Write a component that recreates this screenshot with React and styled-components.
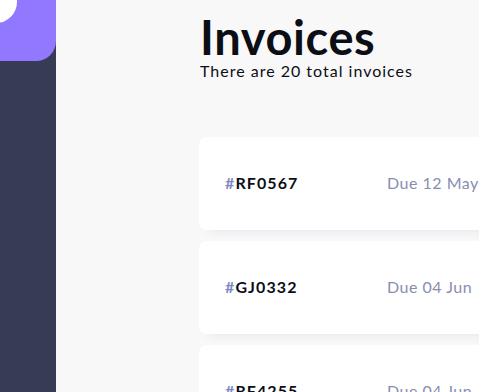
import styled, { createGlobalStyle } from "styled-components";

const Global = createGlobalStyle`
  html, body {
    margin: 0;
    padding: 0;
    background: #f8f8f8;
    font-family: 'Lato', 'Liberation Sans', sans-serif;
  }
`;

const Page = styled.div`
  display: flex;
  width: 479px;
  height: 392px;
  overflow: hidden;
`;

const Sidebar = styled.aside`
  flex: 0 0 56px;
  background: #373b53;
  display: flex;
  flex-direction: column;
`;

const Logo = styled.div`
  width: 56px;
  height: 61px;
  background: #9277ff;
  border-radius: 0 0 20px 0;
  overflow: hidden;
`;

const Main = styled.main`
  flex: 1;
  padding: 17px 0 0 144px;
  overflow: hidden;
`;

const Title = styled.h1`
  margin: 0;
  font-size: 47px;
  line-height: 40px;
  font-weight: 700;
  color: #0c0e16;
  letter-spacing: 0.6px;
`;

const Subtitle = styled.p`
  margin: 4px 0 0;
  font-size: 16px;
  line-height: 20px;
  color: #0c0e16;
  letter-spacing: 1px;
`;

const List = styled.div`
  display: flex;
  flex-direction: column;
  gap: 11px;
  margin-top: 56px;
  margin-left: -1px;
`;

const Card = styled.div`
  width: 420px;
  height: 93px;
  box-sizing: border-box;
  padding: 0 26px 3px;
  background: #fff;
  border-radius: 8px;
  box-shadow: 0 10px 10px -10px rgba(72, 84, 159, 0.12);
  display: grid;
  grid-template-columns: 162px 1fr;
  align-items: center;
`;

const Id = styled.span`
  font-size: 16px;
  font-weight: 700;
  color: #0c0e16;
  letter-spacing: 1.1px;
`;

const Hash = styled.span`
  color: #7e88c3;
`;

const Due = styled.span`
  font-size: 16px;
  color: #888eb0;
  letter-spacing: 0.5px;
  white-space: nowrap;
`;

const invoices = [
  { id: "RF0567", due: "Due 12 May" },
  { id: "GJ0332", due: "Due 04 Jun" },
  { id: "RF4255", due: "Due 04 Jun" },
];

const App = () => {
  return (
    <Page>
      <Global />
      <Sidebar>
        <Logo>
          <svg width="56" height="61" viewBox="0 0 56 61">
            <circle cx="-4" cy="2" r="21" fill="#fff" />
          </svg>
        </Logo>
      </Sidebar>
      <Main>
        <Title>Invoices</Title>
        <Subtitle>There are 20 total invoices</Subtitle>
        <List>
          {invoices.map((inv) => (
            <Card key={inv.id}>
              <Id>
                <Hash>#</Hash>
                {inv.id}
              </Id>
              <Due>{inv.due}</Due>
            </Card>
          ))}
        </List>
      </Main>
    </Page>
  );
};

export default App;
